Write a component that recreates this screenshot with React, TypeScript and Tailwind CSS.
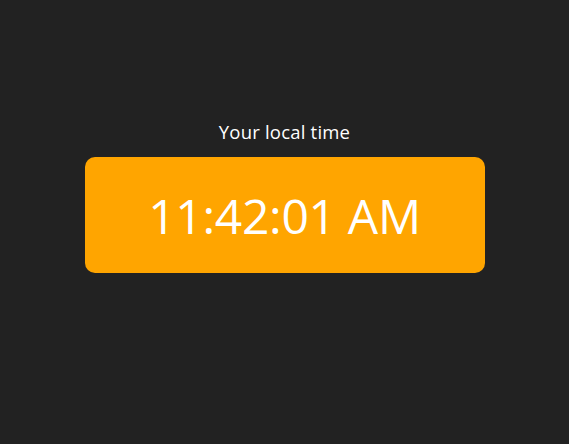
import React from "react";

export default function App() {
  return (
    <div
      className="min-h-screen w-full bg-[#222222] flex flex-col items-center pt-[119px]"
      style={{ fontFamily: '"Open Sans", "Noto Sans", sans-serif' }}
    >
      <div className="text-white text-[18.5px] leading-[25px] tracking-[0.2px]">Your local time</div>
      <div className="mt-[13px] w-[400px] h-[116px] rounded-[10px] bg-[#ffa500] flex items-center justify-center">
        <span className="text-white text-[48px] leading-none tracking-[-0.3px] pt-[2px]">11:42:01 AM</span>
      </div>
    </div>
  );
}
